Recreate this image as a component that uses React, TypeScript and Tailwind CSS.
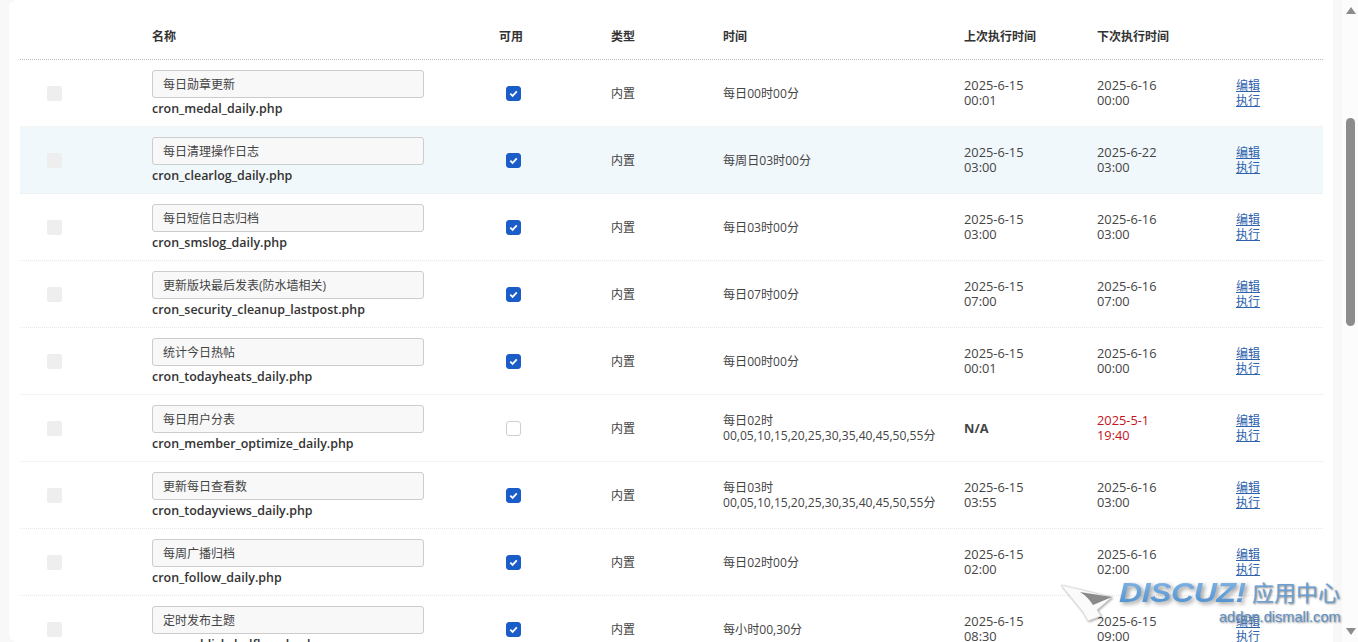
import React from 'react';

const FONT = '"Open Sans", "Noto Sans CJK SC", sans-serif';
const COLS = 'grid grid-cols-[132px_347px_112px_112px_241px_133px_139px_87px] items-center';

type Cron = {
  title: string;
  file: string;
  on: boolean;
  time: string[];
  last: string[];
  next: string[];
  late?: boolean;
  hot?: boolean;
};

const ROWS: Cron[] = [
  { title: '每日勋章更新', file: 'cron_medal_daily.php', on: true, time: ['每日00时00分'], last: ['2025-6-15', '00:01'], next: ['2025-6-16', '00:00'] },
  { title: '每日清理操作日志', file: 'cron_clearlog_daily.php', on: true, time: ['每周日03时00分'], last: ['2025-6-15', '03:00'], next: ['2025-6-22', '03:00'], hot: true },
  { title: '每日短信日志归档', file: 'cron_smslog_daily.php', on: true, time: ['每日03时00分'], last: ['2025-6-15', '03:00'], next: ['2025-6-16', '03:00'] },
  { title: '更新版块最后发表(防水墙相关)', file: 'cron_security_cleanup_lastpost.php', on: true, time: ['每日07时00分'], last: ['2025-6-15', '07:00'], next: ['2025-6-16', '07:00'] },
  { title: '统计今日热帖', file: 'cron_todayheats_daily.php', on: true, time: ['每日00时00分'], last: ['2025-6-15', '00:01'], next: ['2025-6-16', '00:00'] },
  { title: '每日用户分表', file: 'cron_member_optimize_daily.php', on: false, time: ['每日02时', '00,05,10,15,20,25,30,35,40,45,50,55分'], last: [], next: ['2025-5-1', '19:40'], late: true },
  { title: '更新每日查看数', file: 'cron_todayviews_daily.php', on: true, time: ['每日03时', '00,05,10,15,20,25,30,35,40,45,50,55分'], last: ['2025-6-15', '03:55'], next: ['2025-6-16', '03:00'] },
  { title: '每周广播归档', file: 'cron_follow_daily.php', on: true, time: ['每日02时00分'], last: ['2025-6-15', '02:00'], next: ['2025-6-16', '02:00'] },
  { title: '定时发布主题', file: 'cron_publish_halfhourly.php', on: true, time: ['每小时00,30分'], last: ['2025-6-15', '08:30'], next: ['2025-6-15', '09:00'] },
];

const Tick = ({ on }: { on: boolean }) => (
  <span className={`ml-[7px] flex h-[15px] w-[15px] items-center justify-center rounded-[3px] border ${on ? 'border-[#1a5cc8] bg-[#1a5cc8]' : 'border-[#cfcfcf] bg-white'}`}>
    {on && (
      <svg viewBox="0 0 12 12" className="h-[11px] w-[11px]" fill="none" stroke="white" strokeWidth="2">
        <path d="M2.5 6.2 5 8.6 9.6 3.8" />
      </svg>
    )}
  </span>
);

const Lines = ({ lines, red, wide }: { lines: string[]; red?: boolean; wide?: boolean }) => (
  <div className={`leading-[15px] ${wide ? 'text-[12.8px]' : 'text-[12.1px]'} ${red ? 'text-[#c4141b]' : ''}`}>
    {lines.map((l) => (
      <div key={l} className="whitespace-nowrap">{l}</div>
    ))}
  </div>
);

const Row = ({ row }: { row: Cron }) => (
  <div className={`${COLS} h-[67px] shrink-0 border-b border-dotted border-[#e8e8e8] ${row.hot ? 'bg-[#f1f8fb]' : ''}`}>
    <div className="pl-[27px]">
      <span className="block h-[15px] w-[15px] rounded-[2px] bg-[#eeeeee]" />
    </div>
    <div>
      <input
        readOnly
        value={row.title}
        className="block h-7 w-[272px] rounded-[3px] border border-[#cccccc] bg-[#f8f8f8] pl-[10px] text-[#444] outline-none"
      />
      <div className="mt-[3px] text-[12.45px] leading-[16px] font-semibold text-[#333]">{row.file}</div>
    </div>
    <div><Tick on={row.on} /></div>
    <div className="pt-[2px]">内置</div>
    <Lines lines={row.time} />
    {row.last.length ? <Lines lines={row.last} wide /> : <div className="pt-[1px] text-[12.8px] font-bold">N/A</div>}
    <Lines lines={row.next} red={row.late} wide />
    <div className="leading-[15px] text-[#2d62ac] underline">
      <div>编辑</div>
      <div>执行</div>
    </div>
  </div>
);

const Watermark = () => (
  <div className="pointer-events-none absolute top-[578px] left-[1060px] h-[50px] w-[285px]">
    <svg viewBox="0 0 60 42" className="absolute top-[3px] left-0 h-[42px] w-[60px] drop-shadow-[1px_1px_1px_rgba(0,0,0,0.35)]">
      <path d="M1 4 52 16 37 29 41 35 28 40 23 31Z" fill="#fbfbfb" stroke="#d0d0d0" strokeWidth="0.6" />
      <path d="M20 11 52 16 33 24Q28 16 20 11Z" fill="#8a8a8a" />
    </svg>
    <span className="absolute top-[-5px] left-[59px] origin-left scale-x-[1.15] bg-linear-to-b from-[#8fbde8] to-[#3f86c9] bg-clip-text text-[28px] leading-[40px] font-bold tracking-[-0.5px] text-transparent italic drop-shadow-[2px_2px_2px_rgba(0,0,0,0.4)] [font-family:'Liberation_Sans',sans-serif]">
      DISCUZ!
    </span>
    <span className="absolute top-[0px] left-[192px] text-[22px] leading-[28px] text-[#6a9fd4] [text-shadow:1px_1px_2px_#888]">
      应用中心
    </span>
    <span className="absolute top-[29px] left-[159px] text-[14.6px] leading-[20px] text-[#5c8fc4] [font-family:'Liberation_Sans',sans-serif] [text-shadow:1px_1px_2px_#888]">
      addon.dismall.com
    </span>
  </div>
);

export default function App() {
  return (
    <div className="relative flex h-[642px] w-[1358px] overflow-hidden bg-[#f8f8f8] text-[12px] text-[#444]" style={{ fontFamily: FONT }}>
      <main className="ml-[9px] flex h-full w-[1324px] flex-col rounded-l-[8px] bg-white pr-[10px] pl-[11px]">
        <div className={`${COLS} h-[60px] shrink-0 border-b border-dotted border-[#bbbbbb] pt-[14px] font-semibold text-[#333]`}>
          <div />
          <div>名称</div>
          <div>可用</div>
          <div>类型</div>
          <div>时间</div>
          <div>上次执行时间</div>
          <div>下次执行时间</div>
          <div />
        </div>
        {ROWS.map((r) => (
          <Row key={r.file} row={r} />
        ))}
      </main>
      <div className="ml-[9px] flex h-full w-[16px] flex-col items-center justify-between bg-[#fcfcfc] py-[7px] pl-[2px]">
        <span className="h-0 w-0 border-x-[5px] border-b-[7px] border-x-transparent border-b-[#8c8c8c]" />
        <span className="h-0 w-0 border-x-[5px] border-t-[7px] border-x-transparent border-t-[#8c8c8c]" />
      </div>
      <div className="absolute top-[118px] left-[1346px] h-[208px] w-[9px] rounded-full bg-[#8c8c8c]" />
      <Watermark />
    </div>
  );
}
